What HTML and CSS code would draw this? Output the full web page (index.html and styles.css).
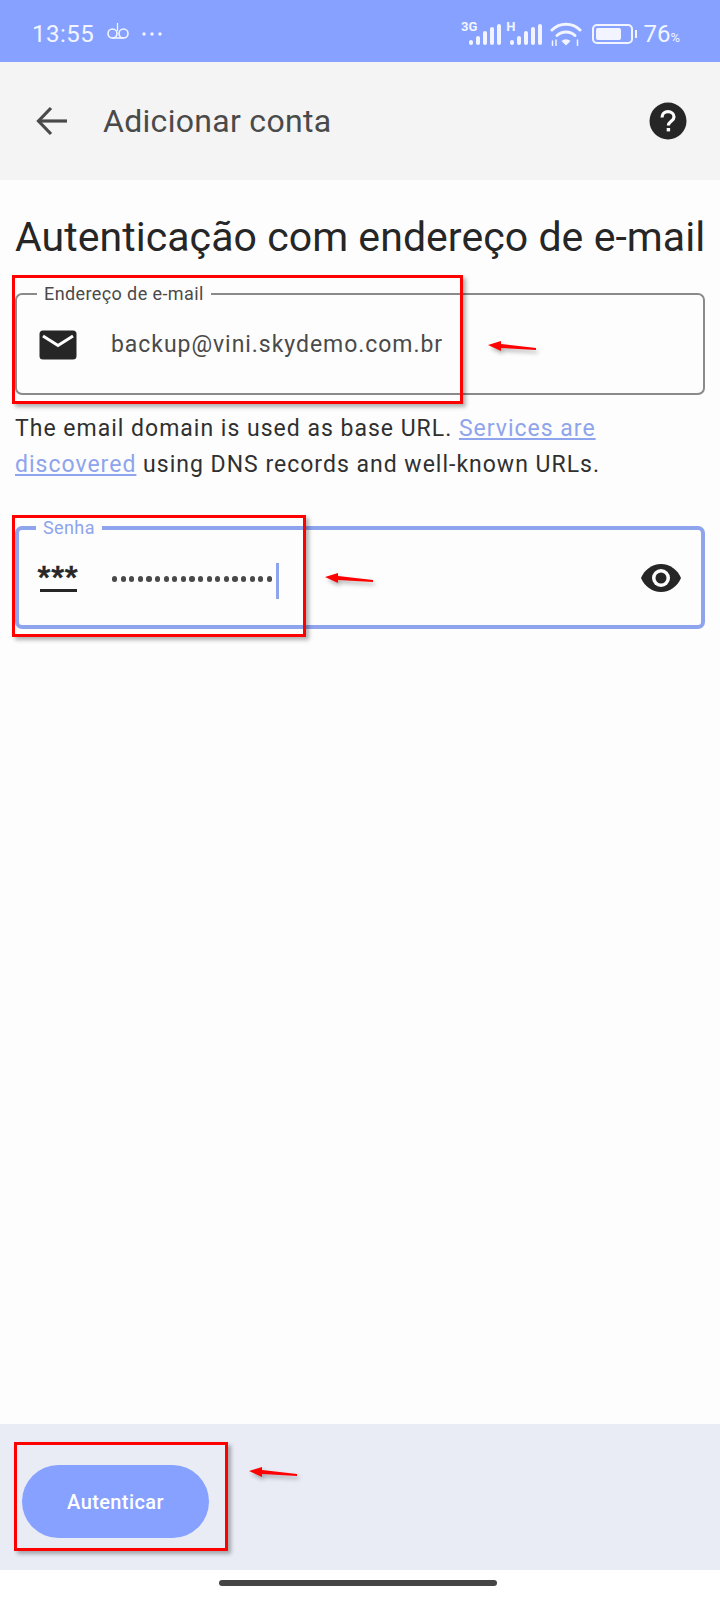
FILE: index.html
```html
<!DOCTYPE html>
<html lang="pt-BR">
<head>
  <meta charset="UTF-8">
  <meta name="viewport" content="width=device-width, initial-scale=1.0">
  <title>Adicionar conta</title>
  <link rel="stylesheet" href="styles.css">
</head>
<body>
  <div id="screen">
    <!-- status bar -->
    <div class="status-bar">
      <div class="status-left">
        <span class="clock">13:55</span>
        <svg class="voicemail" width="22" height="17" viewBox="0 0 22 17" fill="none" stroke="#f2f5ff" stroke-width="1.6">
          <circle cx="5.5" cy="10.500" r="4.500"/>
          <circle cx="16.5" cy="10.500" r="4.500"/>
          <path d="M5.5 15h11"/>
          <path d="M10.500 0v8" stroke-width="1.300"/>
        </svg>
        <svg class="dots" width="22" height="6" viewBox="0 0 22 6" fill="#f2f5ff">
          <circle cx="3" cy="3" r="1.7"/>
          <circle cx="11" cy="3" r="1.7"/>
          <circle cx="19" cy="3" r="1.7"/>
        </svg>
      </div>
      <div class="status-right">
        <div class="signal">
          <span class="net net-3g">3G</span>
          <svg width="32" height="22" viewBox="0 0 32 22" fill="#f2f5ff">
            <rect x="0" y="17" width="4" height="5" rx="2"/>
            <rect x="7" y="13" width="4" height="9" rx="2"/>
            <rect x="14" y="8" width="4" height="14" rx="2"/>
            <rect x="21" y="4" width="4" height="18" rx="2"/>
            <rect x="28" y="1" width="4" height="21" rx="2"/>
          </svg>
        </div>
        <div class="signal">
          <span class="net">H</span>
          <svg width="32" height="22" viewBox="0 0 32 22" fill="#f2f5ff">
            <rect x="0" y="17" width="4" height="5" rx="2"/>
            <rect x="7" y="13" width="4" height="9" rx="2"/>
            <rect x="14" y="8" width="4" height="14" rx="2"/>
            <rect x="21" y="4" width="4" height="18" rx="2"/>
            <rect x="28" y="1" width="4" height="21" rx="2"/>
          </svg>
        </div>
        <svg class="wifi" width="32" height="24" viewBox="0 0 32 24" fill="none" stroke="#f2f5ff" stroke-width="3" stroke-linecap="round">
          <path d="M2 8a20 20 0 0 1 28 0"/>
          <path d="M7 13.500a13 13 0 0 1 18 0"/>
          <path d="M16 23.500l-4.500-4.500a6.500 6.500 0 0 1 9 0z" fill="#f2f5ff" stroke="none"/>
          <path d="M2.500 19v4.500M6 23.500V18M27.500 18v5.500" stroke-width="1.500"/>
        </svg>
        <div class="battery">
          <div class="battery-body"><div class="battery-fill"></div></div>
          <div class="battery-tip"></div>
        </div>
        <span class="percent">76<small>%</small></span>
      </div>
    </div>

    <!-- toolbar -->
    <div class="toolbar">
      <svg class="back" width="34" height="30" viewBox="0 0 34 30" fill="none" stroke="#4a4a4a" stroke-width="3.2">
        <path d="M32 15H4"/>
        <path d="M16 2 3.5 15 16 28"/>
      </svg>
      <span class="toolbar-title">Adicionar conta</span>
      <svg class="help" width="38" height="38" viewBox="0 0 38 38">
        <circle cx="19" cy="19" r="18.5" fill="#262626"/>
        <path d="M13 15.5c0-3.600 2.700-5.900 6-5.900s6 2.200 6 5.300c0 4.200-5.600 4.600-5.600 8.600" fill="none" stroke="#fff" stroke-width="3.200"/>
        <rect x="17.700" y="26" width="3.400" height="3.400" fill="#fff"/>
      </svg>
    </div>

    <div class="content">
      <h1>Autenticação com endereço de e-mail</h1>

      <fieldset class="field">
        <legend>Endereço de e-mail</legend>
        <svg class="field-icon" width="38" height="30" viewBox="0 0 38 30">
          <rect x="0.500" y="0.500" width="37" height="29" rx="3.500" fill="#262626"/>
          <path d="M4 6l15 9.500L34 6" fill="none" stroke="#fff" stroke-width="3"/>
        </svg>
        <span class="field-value">backup@vini.skydemo.com.br</span>
      </fieldset>

      <p class="hint">The email domain is used as base URL. <a href="#">Services are discovered</a> using DNS records and well-known URLs.</p>

      <fieldset class="field field-focus">
        <legend>Senha</legend>
        <div class="pass-icon">
          <span class="stars">***</span>
          <span class="stars-line"></span>
        </div>
        <span class="field-dots">
          <i></i><i></i><i></i><i></i><i></i><i></i><i></i><i></i><i></i><i></i><i></i><i></i><i></i><i></i><i></i><i></i><i></i><i></i><i></i>
        </span>
        <span class="caret"></span>
        <svg class="eye" width="40" height="28" viewBox="0 0 40 28">
          <path d="M20 0C11 0 3.500 5.800 0 14c3.500 8.200 11 14 20 14s16.500-5.800 20-14C36.500 5.800 29 0 20 0z" fill="#262626"/>
          <circle cx="20" cy="14" r="9" fill="#fff"/>
          <circle cx="20" cy="14" r="5.500" fill="#262626"/>
        </svg>
      </fieldset>
    </div>

    <div class="bottom-bar">
      <button class="primary-btn">Autenticar</button>
    </div>

    <div class="nav-area">
      <div class="home-pill"></div>
    </div>

    <!-- red marks drawn over the screenshot -->
    <div class="mark mark-email"></div>
    <div class="mark mark-pass"></div>
    <div class="mark mark-btn"></div>
    <svg class="arrows" width="720" height="1600" viewBox="0 0 720 1600" fill="#f00">
      <path d="M488 345l13-4 0 3 35 4v2l-35-2 0 3z"/>
      <path d="M325 577l13-4 0 3 35 4v2l-35-2 0 3z"/>
      <path d="M249 1471l13-4 0 3 35 4v2l-35-2 0 3z"/>
    </svg>
  </div>
</body>
</html>
```

FILE: styles.css
```css
body, html {
  margin: 0;
  padding: 0;
  width: 720px;
  height: 1600px;
  overflow: hidden;
  font-family: Roboto, "Noto Sans", sans-serif;
}

#screen {
  width: 720px;
  height: 1600px;
  position: relative;
  display: flex;
  flex-direction: column;
  background-color: #fdfdfd;
}

.status-bar {
  height: 62px;
  flex: none;
  box-sizing: border-box;
  background-color: #86a1ff;
  color: #f2f5ff;
  display: flex;
  align-items: center;
  justify-content: space-between;
  padding: 6px 40px 0 32px;
}

.status-left {
  display: flex;
  align-items: center;
}

.clock {
  font-size: 24px;
  letter-spacing: 0.5px;
}

.voicemail {
  margin-left: 13px;
  margin-bottom: 6px;
}

.dots {
  margin-left: 12px;
}

.status-right {
  display: flex;
  align-items: center;
}

.signal {
  display: flex;
  align-items: flex-end;
  margin-right: 5px;
}

.net {
  font-size: 13px;
  font-weight: 700;
  align-self: flex-start;
  margin-right: -5px;
  margin-top: -4px;
}

.net-3g {
  margin-right: -8px;
}

.wifi {
  margin-left: 3px;
}

.battery {
  display: flex;
  align-items: center;
  margin-left: 10px;
}

.battery-body {
  width: 33px;
  height: 12px;
  padding: 2px;
  border: 2px solid #f2f5ff;
  border-radius: 5px;
}

.battery-fill {
  width: 25px;
  height: 100%;
  background-color: #f2f5ff;
  border-radius: 2px;
}

.battery-tip {
  width: 2px;
  height: 8px;
  margin-left: 2px;
  background-color: #f2f5ff;
}

.percent {
  font-size: 24px;
  margin-left: 6px;
}

.percent small {
  font-size: 13px;
}

.toolbar {
  height: 118px;
  flex: none;
  background-color: #f4f4f4;
  display: flex;
  align-items: center;
  padding: 0 33px 0 35px;
}

.toolbar-title {
  font-size: 32px;
  color: #4a4a4a;
  margin-left: 34px;
  letter-spacing: 0.3px;
}

.help {
  margin-left: auto;
}

.content {
  flex: 1;
  padding: 0 15px;
}

h1 {
  margin: 33px 0 0;
  font-size: 41px;
  font-weight: 400;
  line-height: 48px;
  letter-spacing: 0.06px;
  color: #262626;
  white-space: nowrap;
}

.field {
  margin: 0;
  padding: 0 0 0 22px;
  min-width: 0;
  height: 110px;
  box-sizing: border-box;
  border: 2px solid #8a8a8a;
  border-radius: 7px;
  display: flex;
  align-items: center;
}

.field legend {
  margin-left: -2px;
  padding: 0 7px;
  font-size: 18px;
  line-height: 17px;
  color: #4a4a4a;
  letter-spacing: 0.4px;
}

.content > .field {
  margin-top: 24px;
}

.field-icon {
  flex: none;
  margin-bottom: 6px;
}

.field-value {
  margin-left: 34px;
  margin-bottom: 6px;
  font-size: 23px;
  letter-spacing: 0.95px;
  color: #4a4a4a;
}

.hint {
  margin: 16px 0 0;
  font-size: 23px;
  line-height: 36px;
  letter-spacing: 1px;
  color: #303030;
}

.hint a {
  color: #8ea4ec;
}

.content > .field-focus {
  margin-top: 36px;
  border: 4px solid #8ea4ec;
  padding-left: 20px;
}

.field-focus legend {
  margin-left: -3px;
  color: #8ea4ec;
}

.pass-icon {
  width: 38px;
  flex: none;
  display: flex;
  flex-direction: column;
  align-items: center;
  margin-bottom: 2px;
}

.stars {
  font-size: 28px;
  font-weight: 700;
  line-height: 20px;
  height: 22px;
  letter-spacing: 1px;
  color: #262626;
  -webkit-text-stroke: 0.6px #262626;
}

.stars-line {
  width: 37px;
  height: 3px;
  background-color: #262626;
}

.field-dots {
  display: flex;
  gap: 3.300px;
  margin-left: 35px;
  margin-bottom: 3px;
}

.field-dots i {
  width: 5.300px;
  height: 5.300px;
  border-radius: 50%;
  background-color: #4a4a4a;
}

.caret {
  width: 3.500px;
  height: 36px;
  margin-left: 4px;
  background-color: #8ea4ec;
}

.eye {
  margin-left: auto;
  margin-right: 20px;
  margin-bottom: 5px;
}

.bottom-bar {
  height: 146px;
  flex: none;
  box-sizing: border-box;
  padding: 41px 0 0 22px;
  background-color: #e9ecf5;
}

.primary-btn {
  display: block;
  width: 187px;
  height: 73px;
  border: none;
  border-radius: 37px;
  background-color: #86a1ff;
  color: #fff;
  font-family: inherit;
  font-size: 20px;
  font-weight: 500;
  letter-spacing: 0.4px;
}

.nav-area {
  height: 30px;
  flex: none;
  background-color: #fff;
  display: flex;
  justify-content: center;
  padding: 10px 4px 0 0;
  box-sizing: border-box;
}

.home-pill {
  width: 278px;
  height: 6px;
  border-radius: 3px;
  background-color: #454545;
}

.mark {
  position: absolute;
  box-sizing: border-box;
  border: 3px solid #f00;
  box-shadow: 3px 3px 4px rgba(0, 0, 0, 0.3);
}

.mark-email {
  left: 12px;
  top: 275px;
  width: 451px;
  height: 129px;
}

.mark-pass {
  left: 12px;
  top: 515px;
  width: 294px;
  height: 122px;
}

.mark-btn {
  left: 14px;
  top: 1442px;
  width: 214px;
  height: 109px;
}

.arrows {
  position: absolute;
  left: 0;
  top: 0;
  filter: drop-shadow(2px 3px 2px rgba(0, 0, 0, 0.3));
}
```
